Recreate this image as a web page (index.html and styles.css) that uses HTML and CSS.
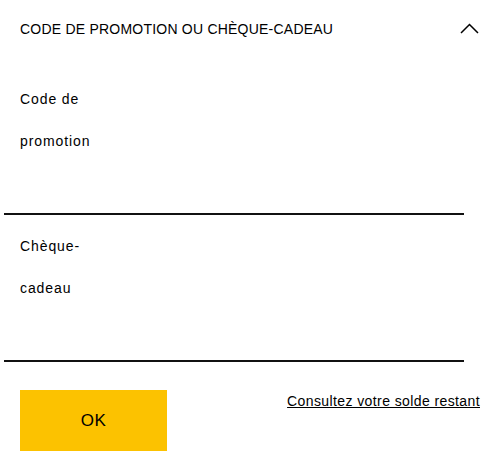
FILE: index.html
```html
<!DOCTYPE html>
<html lang="fr">
<head>
<meta charset="utf-8">
<link rel="stylesheet" href="styles.css">
</head>
<body>
<section class="promo">
  <div class="promo-header">
    <h2 class="promo-title">CODE DE PROMOTION OU CHÈQUE-CADEAU</h2>
    <svg class="chevron" width="19" height="11" viewBox="0 0 19 11" aria-hidden="true">
      <polyline points="1,10 9.5,1.5 18,10" fill="none" stroke="#000" stroke-width="1.5"/>
    </svg>
  </div>
  <div class="field">
    <label class="field-label">Code de promotion</label>
  </div>
  <div class="field">
    <label class="field-label">Chèque-cadeau</label>
  </div>
  <div class="actions">
    <button class="ok-btn">OK</button>
    <a class="balance-link" href="#">Consultez votre solde restant</a>
  </div>
</section>
</body>
</html>
```
FILE: styles.css
```css
* { box-sizing: border-box; }
body {
  margin: 0;
  background: #fff;
  color: #000;
  font-family: "Liberation Sans", Arial, sans-serif;
}
.promo {
  width: 500px;
}
.promo-header {
  display: flex;
  align-items: center;
  justify-content: space-between;
  height: 58px;
  padding: 0 21px 0 20px;
}
.promo-title {
  margin: 0;
  font-size: 14px;
  font-weight: 400;
  letter-spacing: 0.22px;
}
.chevron {
  display: block;
  margin-top: -2px;
}
.field {
  margin-left: 4px;
  width: 460px;
  padding: 10px 0 51px 16px;
  border-bottom: 2px solid #111;
}
.promo-header + .field {
  padding-top: 20px;
}
.field-label {
  display: block;
  width: 95px;
  font-size: 14px;
  line-height: 42px;
  letter-spacing: 0.9px;
}
.actions {
  display: flex;
  justify-content: space-between;
  align-items: flex-start;
  padding: 28px 20px 0 20px;
}
.ok-btn {
  width: 147px;
  height: 61px;
  border: 0;
  background: #fcc200;
  color: #000;
  font-family: inherit;
  font-size: 17px;
  letter-spacing: 0.5px;
  cursor: pointer;
}
.balance-link {
  color: #000;
  font-size: 14px;
  line-height: 20px;
  margin-top: 1px;
  letter-spacing: 0.4px;
  text-decoration: underline;
}
```
